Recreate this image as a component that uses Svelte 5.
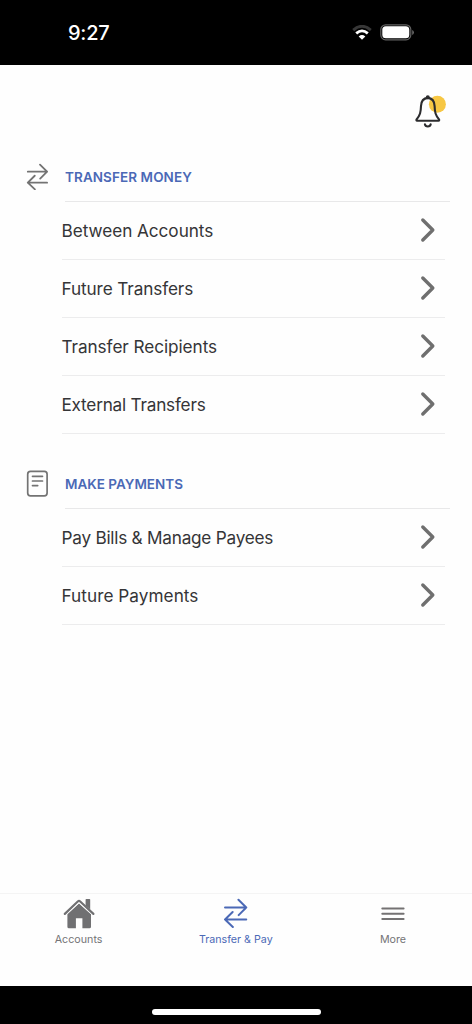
<script>
  const sections = [
    {
      title: 'TRANSFER MONEY', icon: 'transfer', spacing: 0.08,
      items: [['Between Accounts', -0.05], ['Future Transfers', -0.11], ['Transfer Recipients', -0.07], ['External Transfers', -0.22]]
    },
    {
      title: 'MAKE PAYMENTS', icon: 'bill', spacing: 0,
      items: [['Pay Bills & Manage Payees', -0.24], ['Future Payments', 0.04]]
    }
  ];
</script>

{#snippet arrows(w, h)}
  <svg width={w} height={h} viewBox="0 0 24 28" fill="none" stroke="currentColor" stroke-width="1.9" stroke-linecap="round" stroke-linejoin="round">
    <path d="M1.9 9H22M14.6 1.6 22 9l-7.2 7.2M22 20.4H1.9M9.1 13.2 1.9 20.4l7.4 7" />
  </svg>
{/snippet}

<div class="screen">
  <header class="status">
    <span class="time">9:27</span>
    <div class="indicators">
      <svg class="wifi" width="20" height="16" viewBox="0 0 20 16" fill="none">
        <path d="M1.2 5.1Q10-2.5 18.8 5.1" stroke="#373737" stroke-width="2.9" />
        <path d="M4.2 8.4Q10 3.4 15.8 8.4" stroke="#fff" stroke-width="2.8" />
        <path d="M6.7 11.4Q10 8.6 13.3 11.4L10 14.8Z" fill="#fff" />
      </svg>
      <svg width="35" height="17" viewBox="0 0 35 17">
        <rect x=".8" y=".8" width="30" height="15" rx="4.8" fill="none" stroke="#626262" stroke-width="1.2" />
        <rect x="2.3" y="2.3" width="27" height="12" rx="3.5" fill="#fff" />
        <path d="M32.3 6v5q1.5-.8 1.5-2.5T32.3 6" fill="#777" />
      </svg>
    </div>
  </header>

  <main>
    <div class="tools">
      <svg width="34" height="34" viewBox="0 0 34 34" fill="none">
        <circle cx="23.4" cy="9.3" r="8.5" fill="#f7c744" />
        <path d="M13.8 2.9C9.4 3.3 7.2 6.4 7 11c-.2 6.4-.9 9.1-4.4 13.4-.4.6-.3 1.3.5 1.3h21.4c.8 0 .9-.7.5-1.3C21.5 20.1 20.8 17.4 20.6 11c-.2-4.6-2.4-7.7-6.8-8.1Z" stroke="#2c2c2e" stroke-width="2.1" stroke-linejoin="round" />
        <circle cx="13.8" cy="2.3" r="2" fill="#2c2c2e" />
        <path d="M10.9 29.3c.5 2.9 5.3 2.9 5.8 0" stroke="#2c2c2e" stroke-width="2.1" stroke-linecap="round" />
      </svg>
    </div>

    {#each sections as section}
      <section>
        <div class="heading">
          <div class="mark">
            {#if section.icon === 'transfer'}
              {@render arrows(23, 27)}
            {:else}
              <svg width="24" height="28" viewBox="0 0 24 28" fill="none" stroke="currentColor" stroke-width="1.7" stroke-linecap="round">
                <rect x="1.7" y="1.4" width="19.4" height="24.4" rx="2.8" />
                <path d="M6.5 6.3h10M6.5 11h10M6.5 15.6h5.2" />
              </svg>
            {/if}
          </div>
          <h2><span style:letter-spacing="{section.spacing}px">{section.title}</span></h2>
        </div>
        <ul>
          {#each section.items as [label, spacing]}
            <li>
              <span style:letter-spacing="{spacing}px">{label}</span>
              <svg width="18" height="28" viewBox="0 0 18 28" fill="none" stroke="#6f6f6f" stroke-width="3.4" stroke-linecap="round" stroke-linejoin="round">
                <path d="m3.8 4 10 10-10 10" />
              </svg>
            </li>
          {/each}
        </ul>
      </section>
    {/each}
  </main>

  <nav>
    <div class="tab">
      <svg width="34" height="34" viewBox="0 0 34 34" fill="#707072">
        <path d="M23.6 2.8q0-.7.7-.7h3.2q.7 0 .7.7v9.8l-4.6-4.2Z" />
        <path d="m2.8 16.9 13-12.4q1.2-1.1 2.4 0l13.2 12.4" fill="none" stroke="#707072" stroke-width="2.2" stroke-linecap="round" />
        <path d="M5.4 17.1 17 6.5l12 10.6v12.6q0 1.5-1.5 1.5h-7.1v-9.9h-6.5v9.9h-7q-1.5 0-1.5-1.5Z" />
        <path d="m4.5 17.6 12-11.2q.5-.4 1 0l12.2 11.2" fill="none" stroke="#fefefe" stroke-width=".7" />
      </svg>
      <span class="accounts">Accounts</span>
    </div>
    <div class="tab active">
      <div class="glyph">{@render arrows(25.4, 29.6)}</div>
      <span class="pay">Transfer &amp; Pay</span>
    </div>
    <div class="tab">
      <svg width="34" height="34" viewBox="0 0 34 34" stroke="#747273" stroke-width="2" stroke-linecap="round">
        <path d="M6.3 11.6h21.3M6.3 16.8h21.3M6.3 22h21.3" />
      </svg>
      <span class="more">More</span>
    </div>
  </nav>
  <footer><div class="home"></div></footer>
</div>

<style>
  .screen { width: 472px; height: 1024px; display: flex; flex-direction: column; background: #fefefe; overflow: hidden; font-family: Inter, sans-serif; color: #353537; }
  .status { height: 65px; flex: none; box-sizing: border-box; background: #000; display: flex; justify-content: space-between; padding: 20px 57.5px 0 68px; }
  .time { color: #fff; font-size: 20px; line-height: 26px; font-weight: 550; letter-spacing: -.25px; }
  .indicators { display: flex; gap: 8px; padding-top: 4px; }
  .wifi { margin-top: 1px; }
  main { flex: 1; }
  .tools { height: 87px; box-sizing: border-box; display: flex; justify-content: flex-end; padding: 30px 24px 0; }
  section { margin-bottom: 25.2px; }
  .heading { height: 49.6px; display: flex; padding-right: 22px; }
  .mark { width: 65px; flex: none; box-sizing: border-box; padding: 10.7px 0 0 25.5px; color: #737373; }
  .mark svg, li svg, .tab svg { display: block; }
  h2 { flex: 1; margin: 0; border-bottom: 1px solid #e8e8e9; color: #4b69b6; font-size: 13.5px; line-height: 50px; font-weight: 620; white-space: nowrap; }
  ul { list-style: none; margin: 0 27px 0 61.5px; padding: 0; }
  li { height: 58.1px; box-sizing: border-box; border-bottom: 1px solid #ececed; display: flex; align-items: center; justify-content: space-between; font-size: 17.2px; font-weight: 380; white-space: nowrap; }
  li svg { margin-right: 8px; }
  nav { height: 93px; box-sizing: border-box; border-top: 1px solid #f4f4f4; display: grid; grid-template-columns: repeat(3, 157.2px); }
  .tab { display: flex; flex-direction: column; align-items: center; padding-top: 3px; color: #747476; font-size: 10.7px; line-height: 16px; white-space: nowrap; }
  .tab svg { flex: none; }
  .tab span { margin-top: 1px; }
  .active { color: #4b69b6; }
  .glyph { height: 34px; padding-top: 1px; box-sizing: border-box; }
  footer { height: 38px; flex: none; background: #000; display: flex; justify-content: center; box-sizing: border-box; padding-top: 23px; }
  .home { width: 169px; height: 6px; border-radius: 3px; background: #fff; }
</style>
